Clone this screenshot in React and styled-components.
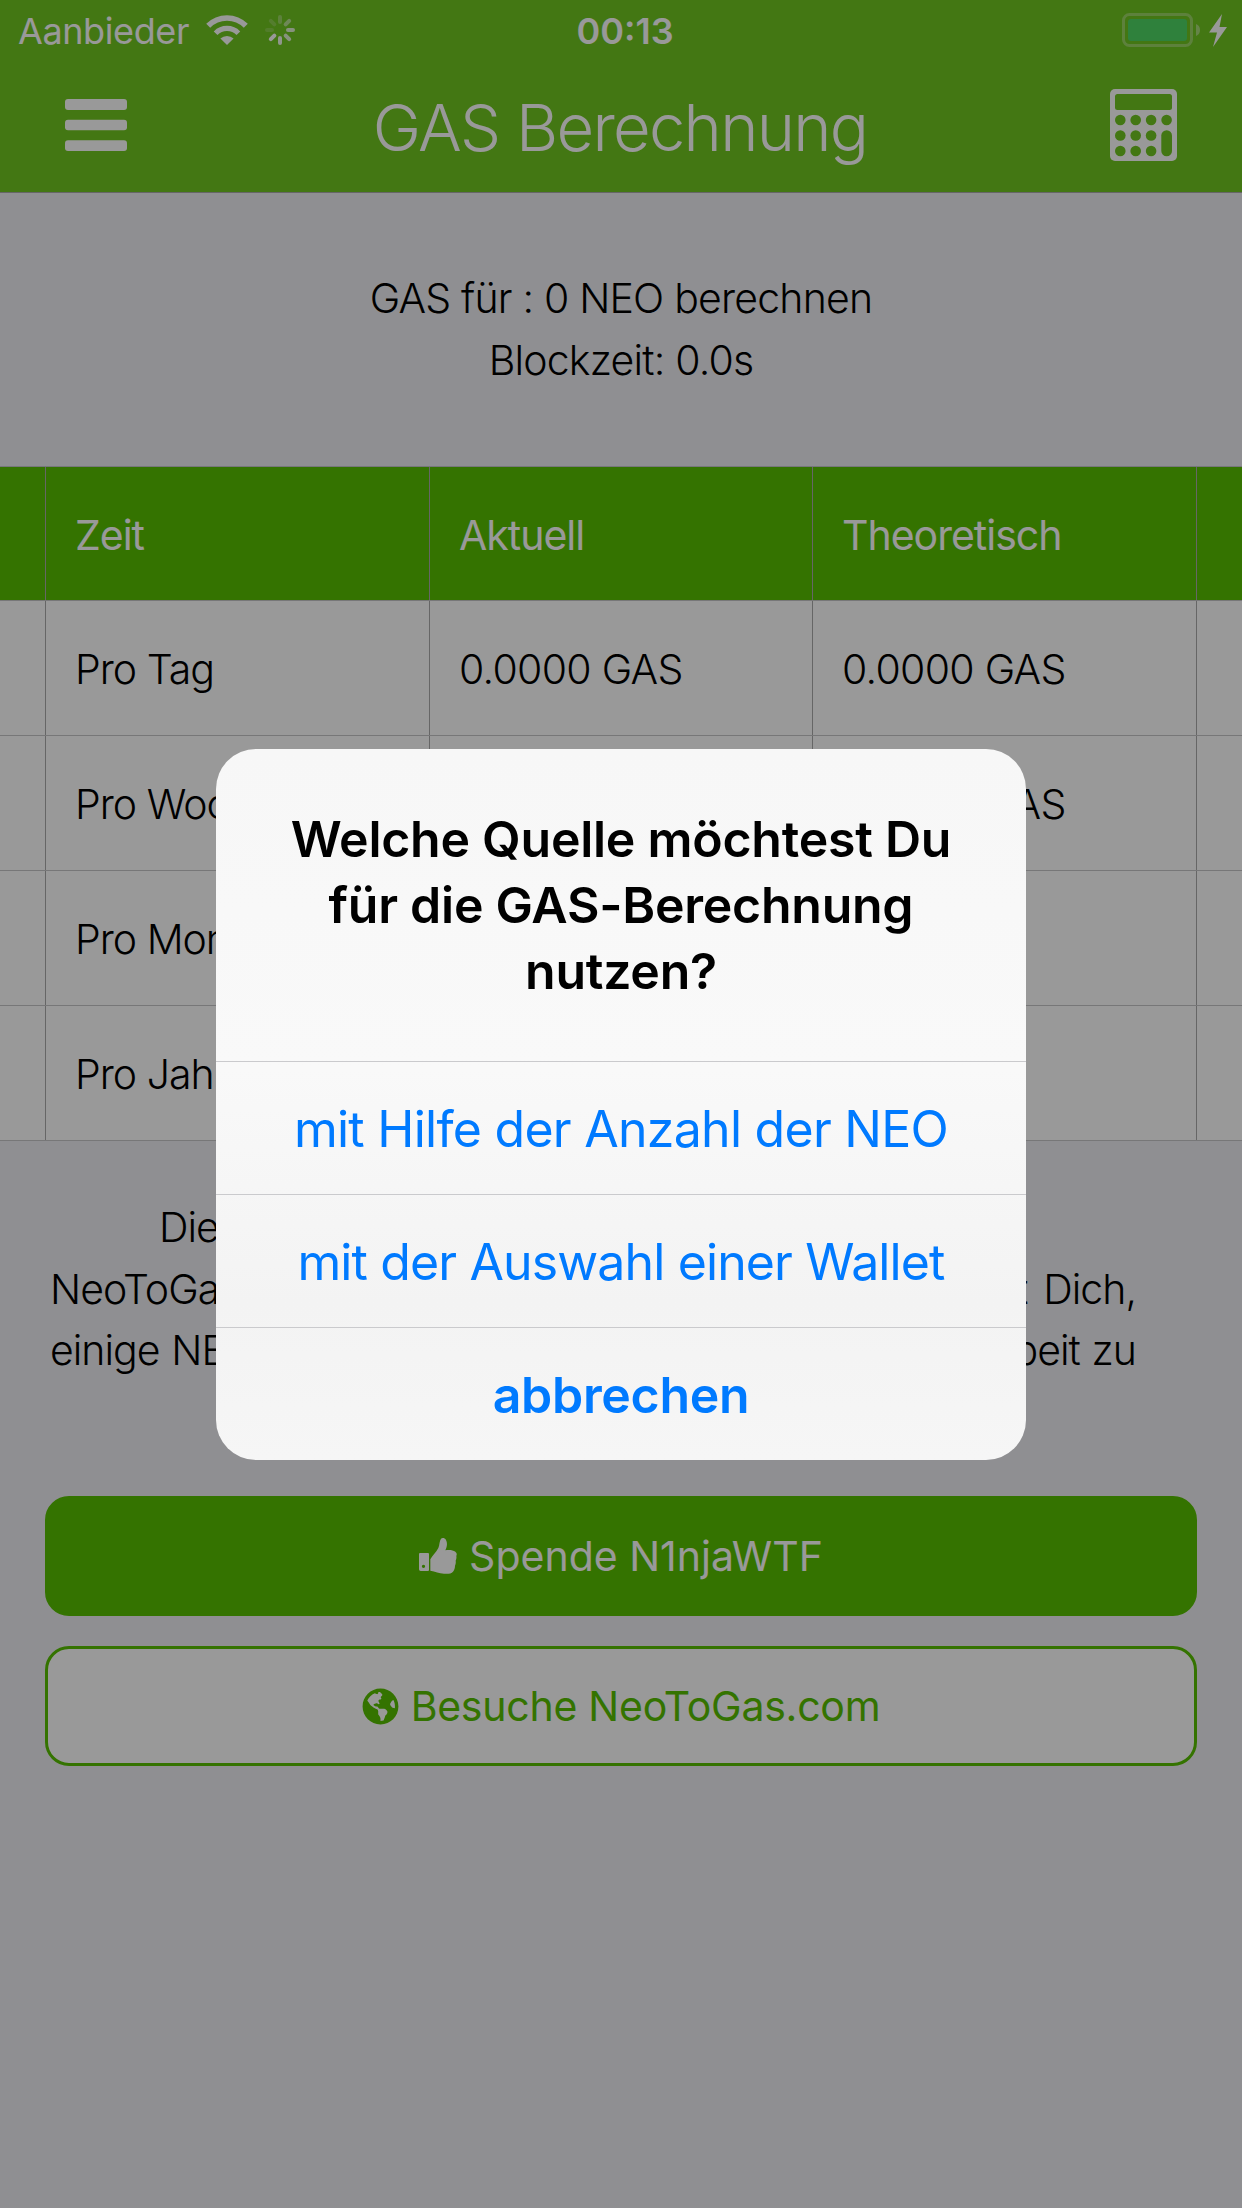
import React from "react";
import styled, { createGlobalStyle } from "styled-components";
import { FaGlobeAmericas } from "react-icons/fa";

const GlobalStyle = createGlobalStyle`
  *, *::before, *::after { box-sizing: border-box; }
  html, body { margin: 0; padding: 0; }
  body { background: #efeff3; font-family: Inter, "Liberation Sans", sans-serif; }
  svg { display: block; flex: none; }
`;

const Screen = styled.div`
  position: relative;
  display: flex;
  flex-direction: column;
  width: 1242px;
  height: 2208px;
  overflow: hidden;
  background: #efeff3;
  color: #000;
`;

const Header = styled.header`
  height: 193px;
  background: #70c621;
  border-bottom: 1px solid #aaa;
  color: #fff;
`;

const StatusBar = styled.div`
  display: grid;
  grid-template-columns: 1fr auto 1fr;
  align-items: center;
  height: 60px;
  padding: 0 15px 0 18px;
`;

const StatusGroup = styled.div`
  display: flex;
  align-items: center;
  justify-content: ${(p) => (p.$end ? "flex-end" : "flex-start")};
  gap: ${(p) => p.$gap}px;
`;

const Carrier = styled.span`
  font-size: 36px;
  line-height: 44px;
  letter-spacing: -0.4px;
  margin: 2px 0 0;
`;

const Clock = styled.span`
  font-size: 36px;
  line-height: 44px;
  font-weight: 600;
  padding: 2px 0 0 5px;
`;

const NavBar = styled.div`
  display: grid;
  grid-template-columns: 1fr auto 1fr;
  align-items: center;
  height: 130px;
  padding: 0 65px;
`;

const NavSlot = styled.div`
  display: flex;
  justify-content: ${(p) => (p.$end ? "flex-end" : "flex-start")};
`;

const Title = styled.h1`
  margin: 6px 2px 0 0;
  font-size: 65px;
  line-height: 78px;
  font-weight: 300;
  letter-spacing: -1.7px;
`;

const Summary = styled.section`
  height: 273px;
  padding-top: 74px;
  text-align: center;
  font-size: 41px;
  line-height: 62px;
  font-weight: 300;
  letter-spacing: -0.8px;
  white-space: nowrap;
`;

const Table = styled.div`
  border-top: 1px solid #c7c7cb;
`;

const Row = styled.div`
  display: grid;
  grid-template-columns: 45px 384px 383px 384px 1fr;
  height: ${(p) => (p.$head ? 134 : 135)}px;
  background: ${(p) => (p.$head ? "#57c000" : "#fff")};
  color: ${(p) => (p.$head ? "#fff" : "#000")};
  font-weight: ${(p) => (p.$head ? 400 : 300)};
  border-bottom: 1px solid #c7c7c9;
`;

const Cell = styled.div`
  display: flex;
  align-items: center;
  padding: 2px 0 0 29px;
  font-size: 41px;
  letter-spacing: ${(p) => (p.$amount ? "-0.7px" : "-1px")};
  white-space: nowrap;
  & + & { border-left: 1px solid #aaa; }
`;

const Appeal = styled.section`
  height: 355px;
  width: 1086px;
  margin-left: 50px;
  padding-top: 56px;
  font-size: 41px;
  line-height: 61.5px;
  font-weight: 300;
`;

const AppealLine = styled.div`
  width: ${(p) => p.$width || 1086}px;
  margin: 0 auto;
  white-space: nowrap;
  letter-spacing: -1px;
  text-align: justify;
  text-align-last: justify;
`;

const Actions = styled.div`
  display: flex;
  flex-direction: column;
  gap: 30px;
  padding: 0 45px;
`;

const Button = styled.button`
  display: flex;
  align-items: center;
  justify-content: center;
  gap: 12px;
  height: 120px;
  padding: 0;
  border: 3px solid #57c000;
  border-radius: 24px;
  background: ${(p) => (p.$filled ? "#57c000" : "#fff")};
  color: ${(p) => (p.$filled ? "#fff" : "#57c000")};
  font-family: inherit;
  font-size: 41px;
  letter-spacing: ${(p) => p.$spacing};
`;

const Backdrop = styled.div`
  position: absolute;
  inset: 0;
  display: flex;
  align-items: center;
  justify-content: center;
  padding-top: 1px;
  background: rgba(0, 0, 0, 0.4);
`;

const Dialog = styled.div`
  width: 810px;
  height: 711px;
  border-radius: 40px;
  overflow: hidden;
  background: linear-gradient(#f7f7f7 0%, #f9f9f9 45%, #f3f3f3 78%, #f6f6f6 100%);
`;

const Question = styled.h2`
  margin: 0;
  height: 312px;
  padding-top: 57px;
  text-align: center;
  font-size: 50px;
  line-height: 66px;
  font-weight: 600;
  letter-spacing: -0.25px;
`;

const Choice = styled.button`
  display: flex;
  align-items: center;
  justify-content: center;
  width: 100%;
  height: 133px;
  padding: 2px 0 0;
  border: 0;
  border-top: 1px solid #cacacd;
  background: transparent;
  color: #007aff;
  font-family: inherit;
  font-size: 50px;
  font-weight: ${(p) => (p.$bold ? 600 : 400)};
  letter-spacing: ${(p) => p.$spacing};
  white-space: nowrap;
`;

const WifiIcon = () => (
  <svg width="42" height="30" viewBox="0 0 42 30" fill="none" stroke="#fff">
    <path d="M2.2 10.8A26.5 26.5 0 0 1 39.8 10.8" strokeWidth="5.6" />
    <path d="M9.6 18.2A16 16 0 0 1 32.4 18.2" strokeWidth="5.2" />
    <path d="M21 30L14.4 23.6A9.6 9.6 0 0 1 27.6 23.6Z" fill="#fff" stroke="none" />
  </svg>
);

const spokes = [0.3, 0.5, 0.8, 0.8, 0.9, 1, 0.18, 0.2];

const SpinnerIcon = () => (
  <svg width="30" height="30" viewBox="-15 -15 30 30">
    {spokes.map((opacity, i) => (
      <rect key={i} x="-2" y="-15" width="4" height="9" rx="2" fill="#fff" opacity={opacity} transform={`rotate(${i * 45})`} />
    ))}
  </svg>
);

const BatteryIcon = () => (
  <svg width="78" height="34" viewBox="0 0 78 34">
    <rect x="1.5" y="1.5" width="68" height="31" rx="6" fill="none" stroke="#fff" strokeOpacity="0.3" strokeWidth="3" />
    <rect x="6" y="6" width="59" height="22" rx="3" fill="#4fd764" />
    <path d="M74 11Q78 12.5 78 17T74 23Z" fill="#fff" opacity="0.4" />
  </svg>
);

const BoltIcon = () => (
  <svg width="18" height="33" viewBox="0 0 18 33">
    <path d="M13 0L0 18.5H8L4 33L18 13H10.5Z" fill="#fff" />
  </svg>
);

const MenuIcon = () => (
  <svg width="62" height="52" viewBox="0 0 62 52" fill="#fff">
    <rect width="62" height="11" rx="3" />
    <rect y="20.7" width="62" height="10.6" rx="3" />
    <rect y="41.3" width="62" height="10.7" rx="3" />
  </svg>
);

const CalculatorIcon = () => (
  <svg width="67" height="72" viewBox="0 0 67 72">
    <rect width="67" height="72" rx="5" fill="#fff" />
    <g fill="#70c621">
      <rect x="5" y="5" width="57" height="16" rx="2.5" />
      {[10.3, 25.7, 41.1].map((x) => [31, 46.5, 62].map((y) => <circle key={`${x}-${y}`} cx={x} cy={y} r="5.3" />))}
      <circle cx="56.6" cy="31" r="5.3" />
      <rect x="51.3" y="41.2" width="10.7" height="26" rx="5.3" />
    </g>
  </svg>
);

const ThumbIcon = () => (
  <svg width="38" height="36" viewBox="0 0 114 108" fill="currentColor">
    <path
      fillRule="evenodd"
      d="M3 45H27Q30 45 30 48V96Q30 99 27 99H5Q0 99 0 94V48Q0 45 3 45ZM13.500 80A5 5 0 1 0 13.500 90A5 5 0 1 0 13.500 80Z"
    />
    <path d="M34 64C40 52 52 42 58 30C62 21 61 8 66 2C70 -1 78 0 81 6C86 15 84 26 79 37C90 35 102 36 109 41C114 45 114 50 112 54C113 59 112 64 110 68C111 74 110 79 108 83C108 90 106 96 102 101C97 107 87 108 75 107C60 106 49 101 34 98Z" />
  </svg>
);

const periods = ["Pro Tag", "Pro Woche", "Pro Monat", "Pro Jahr"];

export default function App() {
  return (
    <>
      <GlobalStyle />
      <Screen>
        <Header>
          <StatusBar>
            <StatusGroup $gap={17}>
              <Carrier>Aanbieder</Carrier>
              <WifiIcon />
              <SpinnerIcon />
            </StatusGroup>
            <Clock>00:13</Clock>
            <StatusGroup $end $gap={9}>
              <BatteryIcon />
              <BoltIcon />
            </StatusGroup>
          </StatusBar>
          <NavBar>
            <NavSlot><MenuIcon /></NavSlot>
            <Title>GAS Berechnung</Title>
            <NavSlot $end><CalculatorIcon /></NavSlot>
          </NavBar>
        </Header>
        <Summary>
          <div>GAS für : 0 NEO berechnen</div>
          <div>Blockzeit: 0.0s</div>
        </Summary>
        <Table>
          <Row $head>
            <Cell />
            <Cell>Zeit</Cell>
            <Cell>Aktuell</Cell>
            <Cell>Theoretisch</Cell>
            <Cell />
          </Row>
          {periods.map((period, i) => (
            <Row key={period}>
              <Cell />
              <Cell>{period}</Cell>
              <Cell $amount>0.0000 GAS</Cell>
              <Cell $amount>{i < 2 ? "0.0000 GAS" : "0.00 GAS"}</Cell>
              <Cell />
            </Row>
          ))}
        </Table>
        <Appeal>
          <AppealLine $width={868}>Diese App ist kostenlos und ohne Werbung.</AppealLine>
          <AppealLine>NeoToGas wird privat betrieben und N1njaWTF bittet Dich,</AppealLine>
          <AppealLine>einige NEO oder GAS zu spenden, um die weitere Arbeit zu</AppealLine>
        </Appeal>
        <Actions>
          <Button $filled $spacing="0px">
            <ThumbIcon />
            Spende N1njaWTF
          </Button>
          <Button $spacing="-0.25px">
            <FaGlobeAmericas size={37} />
            Besuche NeoToGas.com
          </Button>
        </Actions>
        <Backdrop>
          <Dialog>
            <Question>
              Welche Quelle möchtest Du
              <br />
              für die GAS-Berechnung
              <br />
              nutzen?
            </Question>
            <Choice $spacing="-0.73px">mit Hilfe der Anzahl der NEO</Choice>
            <Choice $spacing="-0.87px">mit der Auswahl einer Wallet</Choice>
            <Choice $bold $spacing="-0.3px">abbrechen</Choice>
          </Dialog>
        </Backdrop>
      </Screen>
    </>
  );
}
